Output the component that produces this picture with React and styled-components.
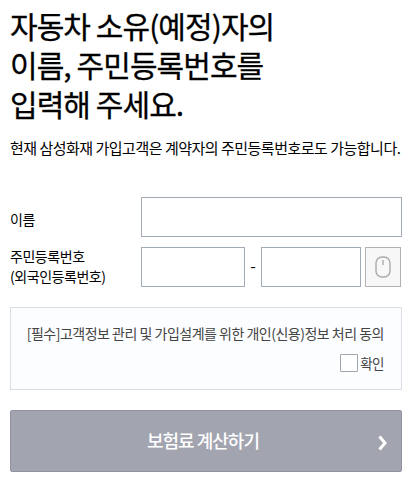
import React from 'react';
import styled, { createGlobalStyle } from 'styled-components';

const Global = createGlobalStyle`
  *, *::before, *::after { box-sizing: border-box; }
  body { margin: 0; background: #fff; color: #000; font-family: "Noto Sans CJK KR", sans-serif; }
`;
const Page = styled.main`
  width: 416px;
  height: 488px;
  padding: 6px 14px 0 10px;
  overflow: hidden;
  white-space: nowrap;
`;
const Title = styled.h1`
  margin: 0;
  font-size: 30px;
  font-weight: 400;
  line-height: 39px;
  letter-spacing: -0.93px;
  -webkit-text-stroke: 0.3px #000;
`;
const Note = styled.p`
  margin: 14px 0 0;
  font-size: 15px;
  line-height: 22px;
  letter-spacing: -0.5px;
`;
const Form = styled.form`
  display: flex;
  flex-direction: column;
  gap: 10px;
  margin-top: 38px;
`;
const Row = styled.div`
  display: grid;
  grid-template-columns: 131px 1fr;
  grid-template-rows: 40px;
  align-items: center;
  height: 40px;
`;
const Label = styled.label`
  padding: ${(p) => p.$pad};
  font-size: 14px;
  line-height: 20px;
  letter-spacing: -0.45px;
`;
const Fields = styled.div`
  display: flex;
  align-items: center;
`;
const Input = styled.input`
  width: ${(p) => p.$width};
  height: 40px;
  border: 1px solid #a3abb6;
  border-radius: 0;
  background: #fff;
  padding: 0 8px;
`;
const Dash = styled.span`
  width: 16px;
  padding-bottom: 5px;
  font-size: 16px;
  text-align: center;
`;
const MouseButton = styled.button`
  display: grid;
  place-items: center;
  width: 36px;
  height: 40px;
  margin-left: 4px;
  padding: 0;
  border: 1px solid #b2b2b2;
  background: #f7f7f7;
`;
const Consent = styled.section`
  display: flex;
  flex-direction: column;
  align-items: flex-end;
  height: 83px;
  margin-top: 20px;
  padding: 15px 17px 0 0;
  border: 1px solid #dadde3;
  background: #fcfdfe;
  color: #444;
  font-size: 14px;
  line-height: 20px;
  letter-spacing: -0.5px;
`;
const Check = styled.label`
  display: flex;
  align-items: center;
  gap: 2px;
  margin-top: 10px;
  font-size: 13.5px;
`;
const Box = styled.input`
  appearance: none;
  width: 18px;
  height: 18px;
  margin: 0;
  border: 1px solid #a0a5ae;
  border-radius: 1px;
  background: #fff;
`;
const Submit = styled.button`
  display: grid;
  grid-template-columns: 14px 1fr 14px;
  align-items: center;
  width: 100%;
  height: 62px;
  margin-top: 20px;
  padding: 0 12px;
  border: 1px solid #9193a0;
  border-radius: 2px;
  background: #a2a4b0;
  color: #fff;
  font: 500 18px "Noto Sans CJK KR", sans-serif;
  letter-spacing: -1px;
`;
const SubmitText = styled.span`
  grid-column: 2;
  padding: 0 6px 3px 0;
`;
const Chevron = styled.svg`
  display: block;
  margin: 4px 0 0 2px;
`;

export default function App() {
  return (
    <Page>
      <Global />
      <Title>자동차 소유(예정)자의<br />이름, 주민등록번호를<br />입력해 주세요.</Title>
      <Note>현재 삼성화재 가입고객은 계약자의 주민등록번호로도 가능합니다.</Note>
      <Form>
        <Row>
          <Label $pad="4px 0 0">이름</Label>
          <Input $width="261px" />
        </Row>
        <Row>
          <Label $pad="0 0 2px">주민등록번호<br />(외국인등록번호)</Label>
          <Fields>
            <Input $width="104px" />
            <Dash>-</Dash>
            <Input $width="100px" />
            <MouseButton type="button">
              <svg width="16" height="22" viewBox="0 0 16 22" fill="none" stroke="#aaa" strokeWidth="1.4">
                <rect x="1" y="1" width="14" height="20" rx="6" />
                <path d="M8 4v5" />
              </svg>
            </MouseButton>
          </Fields>
        </Row>
      </Form>
      <Consent>
        <span>[필수]고객정보 관리 및 가입설계를 위한 개인(신용)정보 처리 동의</span>
        <Check><Box type="checkbox" />확인</Check>
      </Consent>
      <Submit type="button">
        <SubmitText>보험료 계산하기</SubmitText>
        <Chevron width="14" height="18" viewBox="0 0 14 18" fill="none" stroke="#fff" strokeWidth="3">
          <path d="M2.500 2.500L8 9l-5.500 6.500" />
        </Chevron>
      </Submit>
    </Page>
  );
}
